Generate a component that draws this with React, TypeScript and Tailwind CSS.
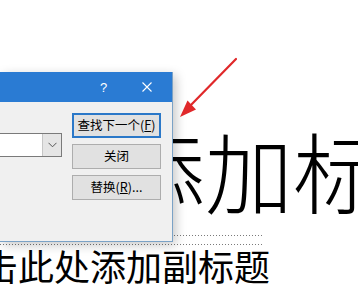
import React from 'react';

const cjk = "font-['Noto_Sans_CJK_SC','Noto_Sans',sans-serif]";

function Dots({ className }: { className: string }) {
  return (
    <div
      className={`h-px bg-[repeating-linear-gradient(90deg,#7a7a7a_0_1px,transparent_1px_3px)] ${className}`}
    />
  );
}

function DialogButton({ children, primary }: { children: React.ReactNode; primary?: boolean }) {
  return (
    <div
      className={`flex h-[25px] items-center justify-center bg-[#e1e1e1] text-[12.5px] leading-none text-black ${
        primary ? 'border-2 border-[#2b78c8]' : 'border border-[#adadad]'
      }`}
    >
      {children}
    </div>
  );
}

function FindDialog() {
  return (
    <div className="absolute left-0 top-[72px] w-[173px] h-[170px] border-r border-b border-[#7ba2c6] bg-[#f0f0f0] shadow-[3px_3px_10px_rgba(0,0,0,0.22)]">
      <div className="flex h-[30px] items-center bg-[#2a7bd3] text-white">
        <span className="ml-[100px] w-[7px] text-[13px] font-['Liberation_Sans',sans-serif] leading-none">?</span>
        <svg className="ml-[35px]" width="10" height="10" viewBox="0 0 10 10">
          <path d="M0.5 0.5 L9.5 9.5 M9.5 0.5 L0.5 9.5" stroke="white" strokeWidth="1.1" />
        </svg>
      </div>
      <div className="flex pt-[11px]">
        <div className="mt-[20px] flex h-[24px] w-[62px] border border-[#7a7a7a] border-l-0 bg-white">
          <div className="flex-1" />
          <div className="flex w-[19px] items-center justify-center bg-[#e5e5e5] border-l border-[#c6c6c6]">
            <svg width="9" height="6" viewBox="0 0 9 6">
              <path d="M0.5 0.8 L4.5 4.8 L8.5 0.8" fill="none" stroke="#555" strokeWidth="1" />
            </svg>
          </div>
        </div>
        <div className={`ml-[10px] flex w-[89px] flex-col gap-[6px] ${cjk}`}>
          <DialogButton primary>
            查找下一个(<span className="underline">F</span>)
          </DialogButton>
          <DialogButton>关闭</DialogButton>
          <DialogButton>
            替换(<span className="underline">R</span>)...
          </DialogButton>
        </div>
      </div>
    </div>
  );
}

function RedArrow() {
  return (
    <svg className="absolute left-0 top-0" width="358" height="284" viewBox="0 0 358 284">
      <line x1="236" y1="59" x2="188" y2="108" stroke="#e0282a" strokeWidth="2.2" strokeLinecap="round" />
      <polygon points="180,117 196,109.5 187.5,100.5" fill="#e0282a" />
    </svg>
  );
}

export default function App() {
  return (
    <div className={`relative h-[284px] w-[358px] overflow-hidden bg-white ${cjk}`}>
      <div className="flex h-[236px] w-[262px] flex-col">
        <div className="ml-[117px] mt-[125px] whitespace-nowrap text-[88px] font-light leading-none text-black">
          添加标题
        </div>
        <div className="flex-1" />
        <Dots className="w-[262px]" />
      </div>
      <div className="mt-[8px] w-[262px]">
        <Dots className="w-[262px]" />
        <div className="ml-[-18px] mt-[2px] whitespace-nowrap text-[36px] leading-none text-black">
          击此处添加副标题
        </div>
      </div>
      <FindDialog />
      <RedArrow />
    </div>
  );
}
